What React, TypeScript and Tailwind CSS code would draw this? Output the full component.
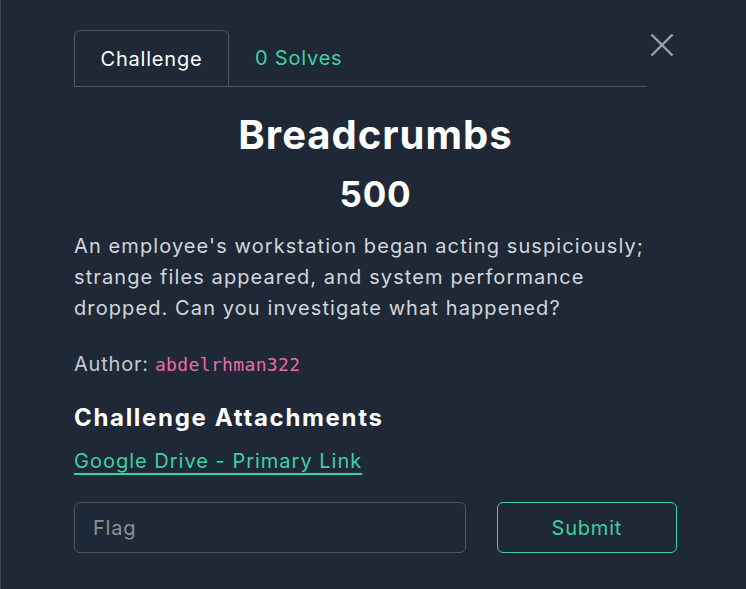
export default function App() {
  return (
    <div
      className="w-[746px] h-[589px] overflow-hidden bg-[#1e2836] border-l border-[#3a4452]"
      style={{ fontFamily: "Inter, 'Noto Sans', sans-serif" }}
    >
      <div className="pl-[73px] pr-[69px] pt-[29px]">
        <div className="flex items-start">
          <div className="flex-1 flex items-end border-b border-[#4b5563]">
            <div className="w-[155px] h-[57px] -mb-px border border-b-0 border-[#4b5563] rounded-t-md flex items-center justify-center text-[20px] tracking-[0.04em] text-white">
              Challenge
            </div>
            <div className="px-[26px] h-[57px] flex items-center text-[20px] tracking-[0.04em] text-[#3fd1a0]">
              0 Solves
            </div>
          </div>
          <button className="w-[30px] h-[30px] mt-[1px] flex items-center justify-center text-[#9aa0a8]">
            <svg width="24" height="24" viewBox="0 0 24 24" fill="none" stroke="currentColor" strokeWidth="2.4">
              <line x1="1.5" y1="1.5" x2="22.5" y2="22.5" />
              <line x1="22.5" y1="1.5" x2="1.5" y2="22.5" />
            </svg>
          </button>
        </div>

        <h1 className="mt-[24px] text-center text-[40px] leading-[48px] font-bold tracking-[0.025em] text-white">
          Breadcrumbs
        </h1>
        <h2 className="mt-[13px] text-center text-[35px] leading-[44px] font-bold tracking-wide text-white">
          500
        </h2>

        <p className="mt-[15px] text-[20px] leading-[31px] tracking-[0.055em] text-[#d3d6da]">
          An employee's workstation began acting suspiciously; strange files appeared, and system performance dropped. Can you investigate what happened?
        </p>

        <div className="mt-[26px] h-[28px] flex items-center gap-[6px] text-[20px] tracking-[0.04em] text-[#c7cbd0]">
          <span>Author:</span>
          <span
            className="text-[18px] tracking-[0.02em] text-[#f06aa8]"
            style={{ fontFamily: "'DejaVu Sans Mono', monospace" }}
          >
            abdelrhman322
          </span>
        </div>

        <h3 className="mt-[24px] text-[24px] leading-[32px] font-bold tracking-[0.07em] text-white">
          Challenge Attachments
        </h3>

        <a
          href="#"
          className="mt-[13px] inline-block text-[20px] leading-[28px] tracking-[0.05em] text-[#3fd1a0] underline underline-offset-[5px]"
        >
          Google Drive - Primary Link
        </a>

        <div className="mt-[27px] flex gap-[31px]">
          <input
            placeholder="Flag"
            className="w-[393px] h-[51px] rounded-md border border-[#4b5563] bg-transparent px-[18px] text-[20px] tracking-[0.04em] text-white placeholder:text-[#8b9099] outline-none"
          />
          <button className="w-[181px] h-[51px] rounded-md border border-[#3fd1a0] text-[20px] tracking-[0.04em] text-[#3fd1a0]">
            Submit
          </button>
        </div>
      </div>
    </div>
  )
}
